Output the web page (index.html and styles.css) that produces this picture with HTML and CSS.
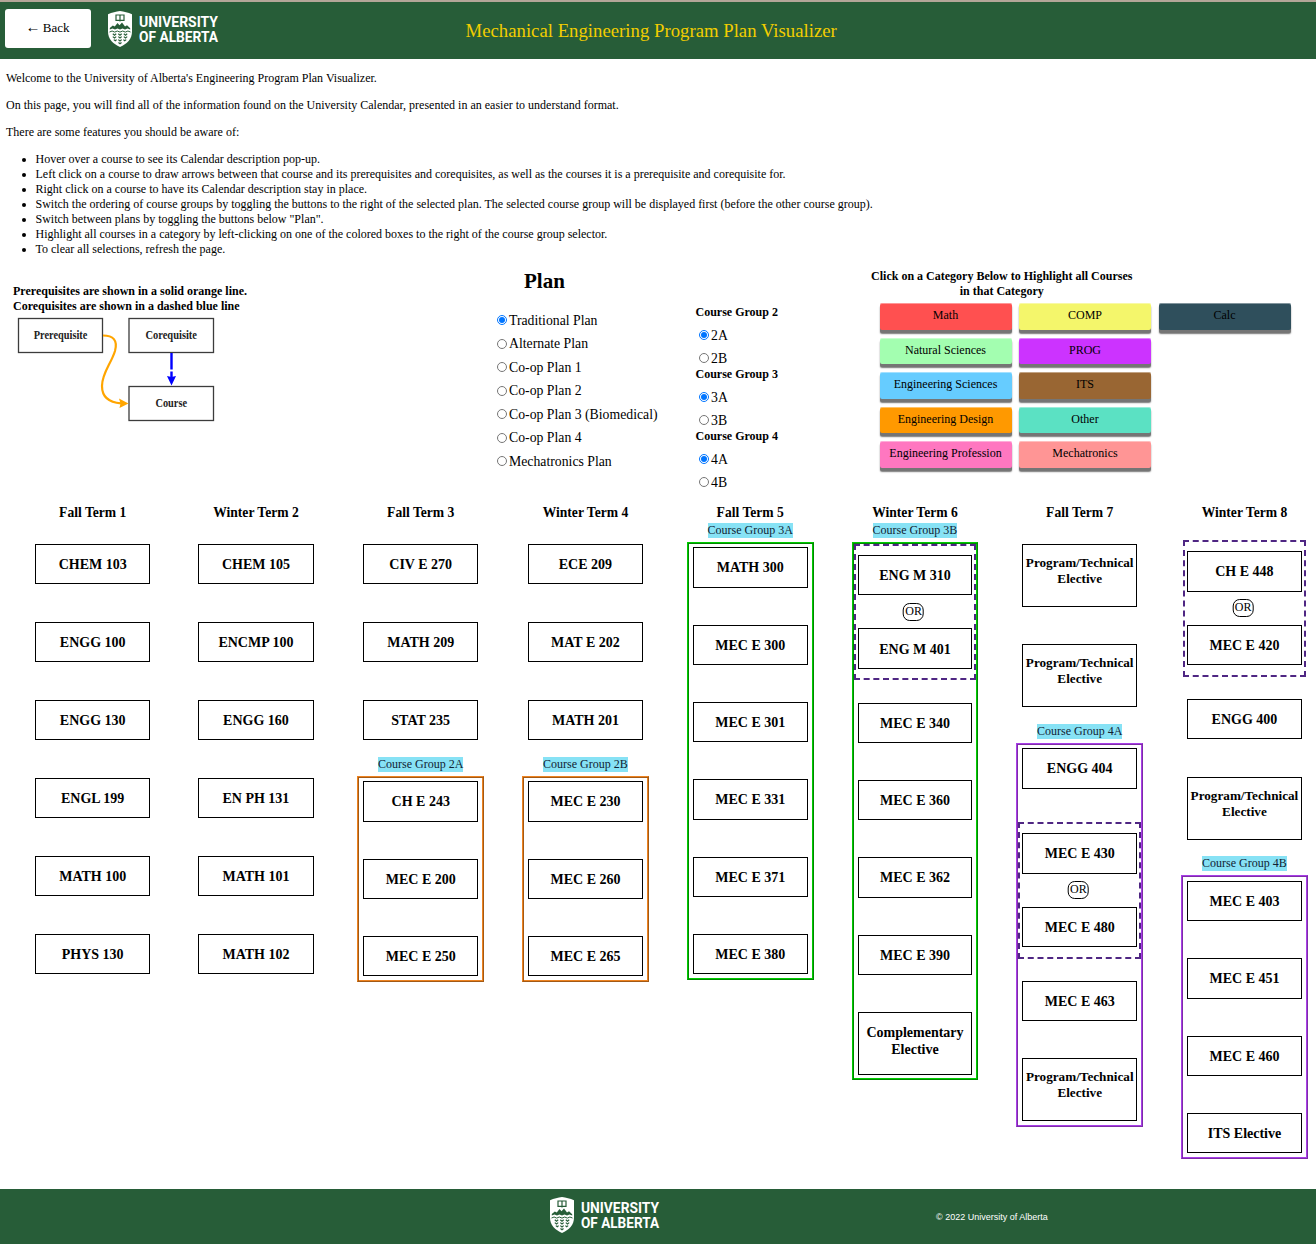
FILE: index.html
```html
<!DOCTYPE html>
<html lang="en">
<head>
<meta charset="utf-8">
<title>Mechanical Engineering Program Plan Visualizer</title>
<link rel="stylesheet" href="styles.css">
</head>
<body>
<svg class="defs" width="0" height="0" aria-hidden="true">
  <symbol id="ua-shield" viewBox="0 0 24 36">
    <path fill="#fff" d="M0 3.200C4 1.600 8 .4 12 0c4 .4 8 1.600 12 3.200V20.500C24 28 19 33 12 36 5 33 0 28 0 20.500Z"/>
    <path fill="none" stroke="#275d38" stroke-width="1.200" d="M8 4h3.400l.6.5.6-.5H16v5.400h-3.400l-.6.5-.6-.5H8ZM12 4.500v5"/>
    <path fill="#275d38" d="M1.800 18.400V17l3-2.500 2 1L9.500 12l2 2.200L14 11.500l3 4 2-1.200 3.200 3v1.100l-2.700-1-2.500 1.200-2.500-1.200-2.500 1.200-2.500-1.200-2.500 1.200-2.500-1.200Z"/>
    <path fill="none" stroke="#275d38" stroke-width="1" d="M1.500 21l2.600-1 2.600 1.100 2.600-1.100 2.700 1.100 2.700-1.100 2.600 1.100 2.600-1.100 2.600 1"/>
    <path fill="none" stroke="#275d38" stroke-width="1.200" d="M4.800 22.800l1.700 1.400 1.700-1.400M10.300 22.800l1.700 1.400 1.700-1.400M15.800 22.800l1.700 1.400 1.700-1.400M4.800 25.600l1.700 1.400 1.700-1.400M10.300 25.600l1.700 1.400 1.700-1.400M15.800 25.600l1.700 1.400 1.700-1.400M5.800 28.600l1.500 1.200 1.300-1.200M10.300 28.600l1.700 1.400 1.700-1.400M15.400 28.600l1.300 1.200 1.500-1.200M10.500 31.500l1.500 1.300 1.500-1.300"/>
  </symbol>
</svg>

<header class="top">
  <a class="back"><span class="arrow">←</span> Back</a>
  <svg class="logo" viewBox="0 0 111 36">
    <use href="#ua-shield" width="24" height="36"/>
    <text x="31" y="15.500" textLength="79" lengthAdjust="spacingAndGlyphs">UNIVERSITY</text>
    <text x="31" y="30.500" textLength="79" lengthAdjust="spacingAndGlyphs">OF ALBERTA</text>
  </svg>
  <h1 class="title">Mechanical Engineering Program Plan Visualizer</h1>
</header>

<section class="intro">
  <p>Welcome to the University of Alberta's Engineering Program Plan Visualizer.</p>
  <p>On this page, you will find all of the information found on the University Calendar, presented in an easier to understand format.</p>
  <p>There are some features you should be aware of:</p>
  <ul>
    <li>Hover over a course to see its Calendar description pop-up.</li>
    <li>Left click on a course to draw arrows between that course and its prerequisites and corequisites, as well as the courses it is a prerequisite and corequisite for.</li>
    <li>Right click on a course to have its Calendar description stay in place.</li>
    <li>Switch the ordering of course groups by toggling the buttons to the right of the selected plan. The selected course group will be displayed first (before the other course group).</li>
    <li>Switch between plans by toggling the buttons below "Plan".</li>
    <li>Highlight all courses in a category by left-clicking on one of the colored boxes to the right of the course group selector.</li>
    <li>To clear all selections, refresh the page.</li>
  </ul>
</section>

<section class="controls">
  <div class="legend">
    <div>Prerequisites are shown in a solid orange line.</div>
    <div>Corequisites are shown in a dashed blue line</div>
    <svg class="diagram" width="206" height="112" viewBox="0 0 206 112">
      <g fill="#fff" stroke="#3c3c3c" stroke-width="1.300">
        <rect x="5.500" y="4.500" width="84" height="34"/>
        <rect x="116" y="4.500" width="84.500" height="34"/>
        <rect x="116" y="72.500" width="84.500" height="34"/>
      </g>
      <path d="M90 21.500C100 21.500 105 26 102 37 98 50 89 59 89 72 89 84 97 88.500 108 89.300" fill="none" stroke="#ffa500" stroke-width="2.200"/>
      <path d="M106 84.500l9.500 5-9 4.500 1-4.500Z" fill="#ffa500"/>
      <path d="M158.500 39v16.500M158.500 57.500v6" stroke="#00f" stroke-width="2.400"/>
      <path d="M154 62l4.500 1 4.500-1-4.500 9.500Z" fill="#00f"/>
      <g class="diagram-text">
        <text x="20.800" y="25" textLength="53.500" lengthAdjust="spacingAndGlyphs">Prerequisite</text>
        <text x="132.500" y="25" textLength="51.500" lengthAdjust="spacingAndGlyphs">Corequisite</text>
        <text x="142.500" y="93" textLength="31.500" lengthAdjust="spacingAndGlyphs">Course</text>
      </g>
    </svg>
  </div>

  <div class="plans">
    <h2>Plan</h2>
    <label><input type="radio" name="plan" checked>Traditional Plan</label>
    <label><input type="radio" name="plan">Alternate Plan</label>
    <label><input type="radio" name="plan">Co-op Plan 1</label>
    <label><input type="radio" name="plan">Co-op Plan 2</label>
    <label><input type="radio" name="plan">Co-op Plan 3 (Biomedical)</label>
    <label><input type="radio" name="plan">Co-op Plan 4</label>
    <label><input type="radio" name="plan">Mechatronics Plan</label>
  </div>

  <div class="groups">
    <h3>Course Group 2</h3>
    <label><input type="radio" name="g2" checked>2A</label>
    <label><input type="radio" name="g2">2B</label>
    <h3>Course Group 3</h3>
    <label><input type="radio" name="g3" checked>3A</label>
    <label><input type="radio" name="g3">3B</label>
    <h3>Course Group 4</h3>
    <label><input type="radio" name="g4" checked>4A</label>
    <label><input type="radio" name="g4">4B</label>
  </div>

  <div class="categories">
    <h3>Click on a Category Below to Highlight all Courses<br>in that Category</h3>
    <div class="swatches">
      <div class="swatch math">Math</div>
      <div class="swatch natural">Natural Sciences</div>
      <div class="swatch engsci">Engineering Sciences</div>
      <div class="swatch design">Engineering Design</div>
      <div class="swatch profession">Engineering Profession</div>
      <div class="swatch comp">COMP</div>
      <div class="swatch prog">PROG</div>
      <div class="swatch its">ITS</div>
      <div class="swatch other">Other</div>
      <div class="swatch mecha">Mechatronics</div>
      <div class="swatch calc">Calc</div>
    </div>
  </div>
</section>

<main class="terms">
  <section class="term first">
    <h3>Fall Term 1</h3>
    <div class="course">CHEM 103</div>
    <div class="course">ENGG 100</div>
    <div class="course">ENGG 130</div>
    <div class="course">ENGL 199</div>
    <div class="course">MATH 100</div>
    <div class="course">PHYS 130</div>
  </section>
  <section class="term second">
    <h3>Winter Term 2</h3>
    <div class="course">CHEM 105</div>
    <div class="course">ENCMP 100</div>
    <div class="course">ENGG 160</div>
    <div class="course">EN PH 131</div>
    <div class="course">MATH 101</div>
    <div class="course">MATH 102</div>
  </section>
  <section class="term">
    <h3>Fall Term 3</h3>
    <div class="course">CIV E 270</div>
    <div class="course">MATH 209</div>
    <div class="course">STAT 235</div>
    <div class="label"><span>Course Group 2A</span></div>
    <div class="group orange">
      <div class="course">CH E 243</div>
      <div class="course">MEC E 200</div>
      <div class="course">MEC E 250</div>
    </div>
  </section>
  <section class="term">
    <h3>Winter Term 4</h3>
    <div class="course">ECE 209</div>
    <div class="course">MAT E 202</div>
    <div class="course">MATH 201</div>
    <div class="label"><span>Course Group 2B</span></div>
    <div class="group orange">
      <div class="course">MEC E 230</div>
      <div class="course">MEC E 260</div>
      <div class="course">MEC E 265</div>
    </div>
  </section>
  <section class="term">
    <h3>Fall Term 5</h3>
    <div class="label"><span>Course Group 3A</span></div>
    <div class="group green">
      <div class="course">MATH 300</div>
      <div class="course">MEC E 300</div>
      <div class="course">MEC E 301</div>
      <div class="course">MEC E 331</div>
      <div class="course">MEC E 371</div>
      <div class="course">MEC E 380</div>
    </div>
  </section>
  <section class="term">
    <h3>Winter Term 6</h3>
    <div class="label"><span>Course Group 3B</span></div>
    <div class="group green">
      <div class="either">
        <div class="course">ENG M 310</div>
        <div class="or">OR</div>
        <div class="course">ENG M 401</div>
      </div>
      <div class="course">MEC E 340</div>
      <div class="course">MEC E 360</div>
      <div class="course">MEC E 362</div>
      <div class="course">MEC E 390</div>
      <div class="course tall comp-elective">Complementary Elective</div>
    </div>
  </section>
  <section class="term">
    <h3>Fall Term 7</h3>
    <div class="course tall">Program/Technical Elective</div>
    <div class="course tall">Program/Technical Elective</div>
    <div class="label"><span>Course Group 4A</span></div>
    <div class="group purple">
      <div class="course">ENGG 404</div>
      <div class="either">
        <div class="course">MEC E 430</div>
        <div class="or">OR</div>
        <div class="course">MEC E 480</div>
      </div>
      <div class="course">MEC E 463</div>
      <div class="course tall">Program/Technical Elective</div>
    </div>
  </section>
  <section class="term">
    <h3>Winter Term 8</h3>
    <div class="either">
      <div class="course">CH E 448</div>
      <div class="or">OR</div>
      <div class="course">MEC E 420</div>
    </div>
    <div class="course">ENGG 400</div>
    <div class="course tall">Program/Technical Elective</div>
    <div class="label tight"><span>Course Group 4B</span></div>
    <div class="group purple">
      <div class="course">MEC E 403</div>
      <div class="course">MEC E 451</div>
      <div class="course">MEC E 460</div>
      <div class="course">ITS Elective</div>
    </div>
  </section>
</main>

<footer class="bottom">
  <svg class="logo" viewBox="0 0 111 36">
    <use href="#ua-shield" width="24" height="36"/>
    <text x="31" y="15.500" textLength="78" lengthAdjust="spacingAndGlyphs">UNIVERSITY</text>
    <text x="31" y="30.500" textLength="78" lengthAdjust="spacingAndGlyphs">OF ALBERTA</text>
  </svg>
  <small>© 2022 University of Alberta</small>
</footer>
</body>
</html>
```
FILE: styles.css
```css
* { box-sizing: border-box; }

body {
  margin: 0;
  min-height: 1244px;
  display: flex;
  flex-direction: column;
  background: #fff;
  color: #000;
  font: 12px/15px "Liberation Serif", "Times New Roman", serif;
}

h1, h2, h3, p, ul { margin: 0; }

.defs { position: absolute; }

/* Header and footer bars */
.top {
  height: 59px;
  border-top: 2px solid #b3a698;
  background: #275d38;
  display: flex;
  align-items: flex-start;
  padding: 7px 0 0 5px;
}

.back {
  width: 86px;
  height: 39px;
  border-radius: 3px;
  background: #fff;
  font-size: 13px;
  line-height: 36px;
  text-align: center;
}

.arrow { font-size: 15px; margin: 0 -1px; }

.logo {
  width: 111px;
  height: 36px;
  display: block;
  fill: #fff;
  font: bold 15.5px Roboto, sans-serif;
}
.top .logo { margin: 2px 0 0 17px; }

.title {
  margin: 11px 0 0 246.5px;
  font-size: 18.75px;
  font-weight: normal;
  line-height: 22px;
  color: #f2cd00;
}

.bottom {
  margin-top: auto;
  height: 55px;
  background: #275d38;
  color: #fff;
  display: flex;
  padding: 8px 0 0 550px;
}

.bottom small {
  margin: 14px 0 0 275px;
  font: 9px/12px "Liberation Sans", Arial, sans-serif;
}

/* Introduction */
.intro { padding: 12px 6px 0; }
.intro p { margin-bottom: 12px; }
.intro ul { padding-left: 29.5px; }

/* Controls */
.controls {
  height: 247px;
  padding-left: 13px;
  display: grid;
  grid-template-columns: 484px 198.5px 175px 1fr;
}

.legend { padding-top: 27px; font-weight: bold; }
.diagram { display: block; }
.diagram-text { font: bold 11.5px "Liberation Serif", serif; fill: #222; }

.plans { padding-top: 12px; }
.plans h2 {
  margin: 0 0 15.5px 27px;
  font-size: 21px;
  line-height: 24px;
}

label {
  display: flex;
  align-items: center;
  gap: 2px;
  font-size: 13.75px;
}

input[type="radio"] { width: 10px; height: 10px; margin: 0; }

.plans label { height: 23.5px; }

.groups { padding-top: 48px; }
.groups h3 { font-size: 12px; line-height: 15px; height: 18.5px; }
.groups label { height: 23px; padding-left: 3.5px; }
.groups label + h3 { margin-top: -2.5px; }

.categories { padding-top: 12px; }
.categories h3 {
  width: 262.5px;
  font-size: 12px;
  line-height: 15px;
  text-align: center;
  white-space: nowrap;
}

.swatches {
  margin: 4.3px 0 0 9px;
  display: grid;
  grid-auto-flow: column;
  grid-template-rows: repeat(5, 26.5px);
  grid-auto-columns: 132px;
  gap: 8px 7.5px;
}

.swatch {
  border-radius: 2px;
  text-align: center;
  line-height: 25.5px;
  box-shadow: 0 3px 0 #757575, 0 3.5px 1.5px #777, inset 0 1px 0 rgba(255, 255, 255, .4);
}

.math { background: #ff5050; }
.natural { background: #a3feb0; }
.engsci { background: #66ccff; }
.design { background: #ff9900; }
.profession { background: #ff77c0; }
.comp { background: #f4f66b; }
.prog { background: #cc33ff; }
.its { background: #996633; }
.other { background: #5be1c3; }
.mecha { background: #ff9595; }
.calc { background: #2f4f5c; }

/* Term columns */
.terms {
  display: flex;
  gap: 38.17px;
  padding-left: 29.4px;
}

.term { flex: none; width: 126.6px; }
.term.first { margin-right: -1.5px; }

.term h3 {
  margin-bottom: 22px;
  font-size: 13.6px;
  line-height: 18px;
  text-align: center;
  white-space: nowrap;
}

.course {
  width: 114.8px;
  height: 40px;
  margin: 0 auto 38px;
  padding-top: 2px;
  border: 1px solid #000;
  display: flex;
  align-items: center;
  justify-content: center;
  text-align: center;
  font-size: 14px;
  font-weight: bold;
  line-height: 16px;
}

.term.second .course { width: 115.4px; }

.group .course,
.either .course { height: 40.33px; margin-bottom: 37px; }

.course.tall,
.group .course.tall {
  height: 62.9px;
  margin-bottom: 37.1px;
  padding-top: 10.3px;
  align-items: flex-start;
  font-size: 13.2px;
}

.group .course.comp-elective { font-size: 14px; line-height: 17px; padding-top: 11px; }

.label {
  height: 19px;
  margin-top: -21px;
  text-align: center;
  color: #123;
}
.label span { display: inline-block; height: 15px; background: #87e2f5; }
.tall + .label { margin-top: -20px; }
.tall + .label.tight { margin-top: -20.5px; }

/* Two-tone raised frame: light outside at top left, dark outside at bottom right */
.group {
  margin-right: -0.1px;
  padding: 4.3px 0;
  border: 1px solid;
  border-color: var(--light) var(--dark) var(--dark) var(--light);
  box-shadow: inset 1px 1px 0 var(--dark), inset -1px -1px 0 var(--light);
}
.group.orange { --light: #ee8320; --dark: #a35a15; }
.group.green { --light: #00cc00; --dark: #008800; }
.group.purple { --light: #a83fe8; --dark: #7f2ca8; padding-bottom: 4.5px; }
.tight + .group { padding-top: 4.6px; }
.group > .course:last-child { margin-bottom: 0; }

.either {
  width: 122.6px;
  height: 136.3px;
  margin: -3.3px auto 22.25px;
  padding-top: 9px;
  border: 2px dashed #4f2683;
}

.term > .either { margin-top: -3.7px; }

.either .course,
.group .either .course { margin-bottom: 0; }

.or {
  width: 21px;
  height: 18px;
  margin: 7.7px auto 7.4px;
  border: 1px solid #000;
  border-radius: 7px;
  line-height: 14px;
  text-align: center;
  transform: translateX(-1.3px);
}
```
